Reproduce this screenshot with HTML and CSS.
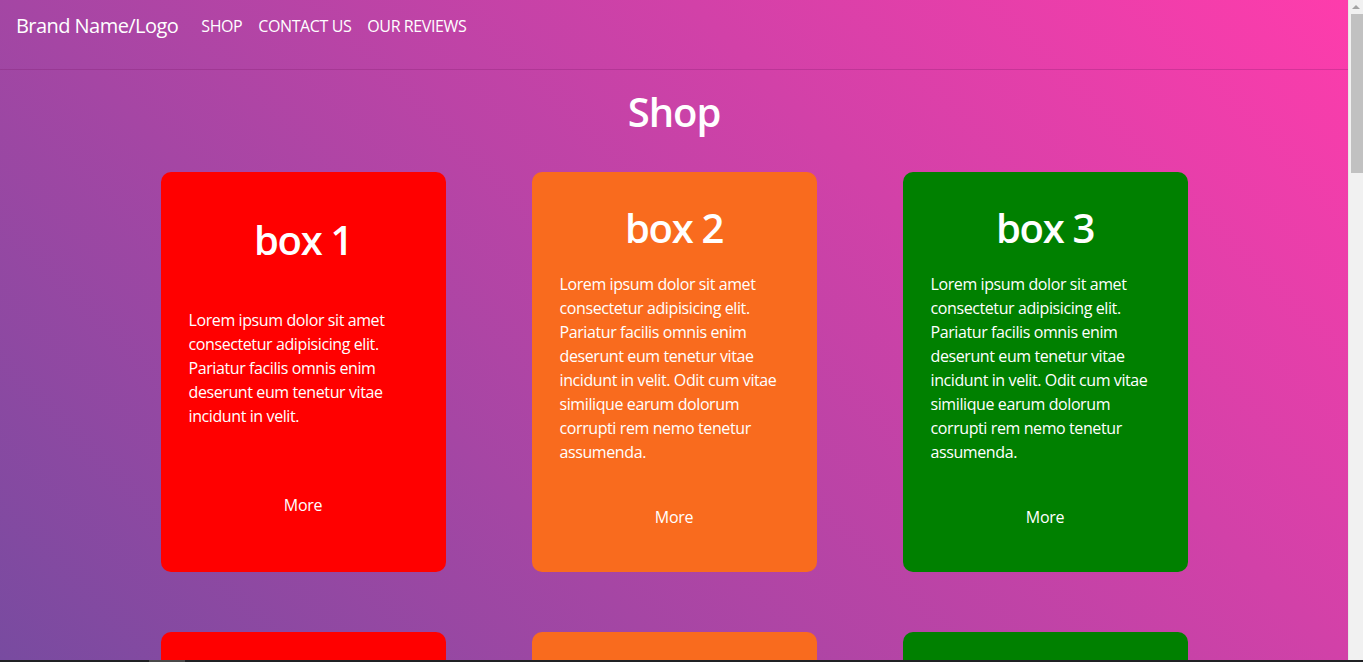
FILE: index.html
```html
<!DOCTYPE html>
<html lang="en">
<head>
<meta charset="utf-8">
<title>Shop</title>
<link rel="stylesheet" href="styles.css">
</head>
<body>
<div class="page">
  <nav class="navbar">
    <a class="brand" href="#">Brand Name/Logo</a>
    <ul class="nav-links">
      <li><a href="#">SHOP</a></li>
      <li><a href="#">CONTACT US</a></li>
      <li><a href="#">OUR REVIEWS</a></li>
    </ul>
  </nav>
  <main class="shop">
    <h1 class="shop-title">Shop</h1>
    <div class="grid">
      <div class="box red">
        <h2 class="box-title">box 1</h2>
        <p class="box-text">Lorem ipsum dolor sit amet consectetur adipisicing elit. Pariatur facilis omnis enim deserunt eum tenetur vitae incidunt in velit.</p>
        <a class="more" href="#">More</a>
      </div>
      <div class="box orange">
        <h2 class="box-title">box 2</h2>
        <p class="box-text">Lorem ipsum dolor sit amet consectetur adipisicing elit. Pariatur facilis omnis enim deserunt eum tenetur vitae incidunt in velit. Odit cum vitae similique earum dolorum corrupti rem nemo tenetur assumenda.</p>
        <a class="more" href="#">More</a>
      </div>
      <div class="box green">
        <h2 class="box-title">box 3</h2>
        <p class="box-text">Lorem ipsum dolor sit amet consectetur adipisicing elit. Pariatur facilis omnis enim deserunt eum tenetur vitae incidunt in velit. Odit cum vitae similique earum dolorum corrupti rem nemo tenetur assumenda.</p>
        <a class="more" href="#">More</a>
      </div>
      <div class="box red">
        <h2 class="box-title">box 4</h2>
        <p class="box-text">Lorem ipsum dolor sit amet consectetur adipisicing elit. Pariatur facilis omnis enim deserunt eum tenetur vitae incidunt in velit.</p>
        <a class="more" href="#">More</a>
      </div>
      <div class="box orange">
        <h2 class="box-title">box 5</h2>
        <p class="box-text">Lorem ipsum dolor sit amet consectetur adipisicing elit. Pariatur facilis omnis enim deserunt eum tenetur vitae incidunt in velit. Odit cum vitae similique earum dolorum corrupti rem nemo tenetur assumenda.</p>
        <a class="more" href="#">More</a>
      </div>
      <div class="box green">
        <h2 class="box-title">box 6</h2>
        <p class="box-text">Lorem ipsum dolor sit amet consectetur adipisicing elit. Pariatur facilis omnis enim deserunt eum tenetur vitae incidunt in velit. Odit cum vitae similique earum dolorum corrupti rem nemo tenetur assumenda.</p>
        <a class="more" href="#">More</a>
      </div>
    </div>
  </main>
</div>
<div class="scrollbar">
  <div class="scroll-up"></div>
  <div class="scroll-thumb"></div>
</div>
<div class="taskbar">
  <div class="taskbar-item"></div>
</div>
</body>
</html>
```
FILE: styles.css
```css
html {
  min-height: 100%;
  background: linear-gradient(45deg, #784ba0 0%, #ff3cac 100%) fixed;
}
body {
  margin: 0;
  font-family: "Open Sans", "Noto Sans", sans-serif;
  color: #fff;
}
a {
  color: #fff;
  text-decoration: none;
}
.page {
  margin-right: 15px;
}
.navbar {
  display: flex;
  align-items: flex-start;
  height: 69px;
  padding: 0 16px;
  border-bottom: 1px solid rgba(120, 20, 100, 0.25);
}
.brand {
  font-size: 20px;
  line-height: 28px;
  margin-top: 12px;
  margin-right: 23px;
  letter-spacing: -0.55px;
}
.nav-links {
  display: flex;
  list-style: none;
  margin: 14px 0 0;
  padding: 0;
  gap: 16px;
}
.nav-links a {
  font-size: 16px;
  line-height: 24px;
  letter-spacing: -0.4px;
}
.shop {
  padding-bottom: 60px;
}
.shop-title {
  margin: 18px 0 36px;
  text-align: center;
  font-size: 40px;
  line-height: 48px;
  font-weight: 600;
  letter-spacing: -1px;
}
.grid {
  display: grid;
  grid-template-columns: repeat(3, 285px);
  column-gap: 86px;
  row-gap: 60px;
  justify-content: center;
}
.box {
  height: 400px;
  box-sizing: border-box;
  border-radius: 10px;
  padding: 24px 28px 35px;
  display: flex;
  flex-direction: column;
  justify-content: space-around;
}
.red { background: #ff0000; }
.orange { background: #f96b1e; }
.green { background: #008000; }
.box-title {
  margin: 0 0 4px;
  text-align: center;
  font-size: 40px;
  line-height: 48px;
  font-weight: 600;
  letter-spacing: -1.3px;
}
.box-text {
  margin: 0 0 25px;
  font-size: 16px;
  line-height: 24px;
  letter-spacing: -0.4px;
}
.more {
  display: block;
  text-align: center;
  font-size: 16px;
  line-height: 24px;
  letter-spacing: -0.3px;
}
.scrollbar {
  position: fixed;
  top: 0;
  right: 0;
  bottom: 0;
  width: 14px;
  background: #f1f1f1;
  border-left: 1px solid #e8e8e8;
}
.scroll-up {
  width: 0;
  height: 0;
  margin: 5px auto 0;
  border-left: 4px solid transparent;
  border-right: 4px solid transparent;
  border-bottom: 4px solid #a3a3a3;
}
.scroll-thumb {
  position: absolute;
  top: 14px;
  left: 2px;
  width: 12px;
  height: 159px;
  background: #c1c1c1;
}
.taskbar {
  position: fixed;
  left: 0;
  right: 0;
  bottom: 0;
  height: 2px;
  background: #202124;
}
.taskbar-item {
  width: 36px;
  height: 2px;
  margin-left: 149px;
  background: #4a4a4a;
}
```
